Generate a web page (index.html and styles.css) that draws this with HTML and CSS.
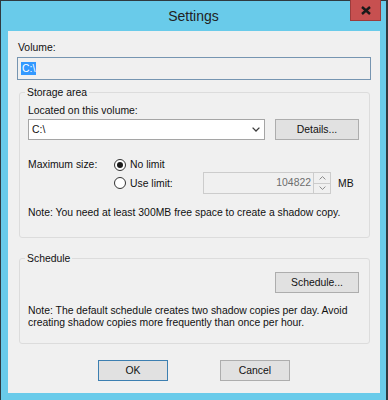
FILE: index.html
```html
<!DOCTYPE html>
<html lang="en">
<head>
    <meta charset="UTF-8">
    <title>Settings</title>
    <link rel="stylesheet" href="styles.css">
</head>
<body>
    <div class="window">
        <div class="titlebar">
            <span></span>
            <h1 class="title">Settings</h1>
            <div class="close">
                <svg width="10" height="9" viewBox="0 0 10 9"><path d="M1 1 L9 8 M9 1 L1 8" stroke="#1a1a1a" stroke-width="2.4" fill="none"/></svg>
            </div>
        </div>

        <div class="client">
            <div class="field-label">Volume:</div>
            <div class="volume-box"><span class="selected">C:\</span></div>

            <!-- Storage area -->
            <fieldset class="group">
                <legend>Storage area</legend>
                <div class="line">Located on this volume:</div>
                <div class="combo-row">
                    <div class="combo">
                        <span>C:\</span>
                        <svg width="8" height="5" viewBox="0 0 8 5"><path d="M0.6 0.6 L4 4 L7.4 0.6" fill="none" stroke="#3c3c3c" stroke-width="1.3"/></svg>
                    </div>
                    <div class="btn">Details...</div>
                </div>
                <div class="size-grid">
                    <span class="line">Maximum size:</span>
                    <span class="radio checked"></span>
                    <span class="line">No limit</span>
                    <span></span>
                    <span></span>

                    <span></span>
                    <span class="radio"></span>
                    <span class="line">Use limit:</span>
                    <div class="spin">
                        <span class="spin-value">104822</span>
                        <div class="spin-btns">
                            <div class="spin-btn"><svg width="7" height="4" viewBox="0 0 7 4"><path d="M0.6 3.4 L3.5 0.6 L6.4 3.4" fill="none" stroke="#8a8a8a" stroke-width="1"/></svg></div>
                            <div class="spin-btn"><svg width="7" height="4" viewBox="0 0 7 4"><path d="M0.6 0.6 L3.5 3.4 L6.4 0.6" fill="none" stroke="#8a8a8a" stroke-width="1"/></svg></div>
                        </div>
                    </div>
                    <span class="line unit">MB</span>
                </div>
                <p class="note">Note: You need at least 300MB free space to create a shadow copy.</p>
            </fieldset>

            <!-- Schedule -->
            <fieldset class="group schedule">
                <legend>Schedule</legend>
                <div class="btn-row">
                    <div class="btn">Schedule...</div>
                </div>
                <p class="note two-lines">Note: The default schedule creates two shadow copies per day. Avoid<br>creating shadow copies more frequently than once per hour.</p>
            </fieldset>

            <div class="dialog-buttons">
                <div class="btn small default">OK</div>
                <div class="btn small">Cancel</div>
            </div>
        </div>
    </div>
</body>
</html>
```

FILE: styles.css
```css
/* Estilos gerais */
* {
    box-sizing: border-box;
}

body {
    margin: 0;
    background-color: #69cbea;
    font-family: "Liberation Sans", Arial, sans-serif;
    font-size: 10.4px;
    color: #111;
}

.window {
    width: 388px;
    height: 400px;
    background-color: #69cbea;
    border-top: 1px solid #2f3a40;
    border-left: 1px solid #2f3a40;
    border-right: 2px solid #2f3a40;
    display: flex;
    flex-direction: column;
}

/* Barra de titulo */
.titlebar {
    height: 30px;
    display: grid;
    grid-template-columns: 1fr auto 1fr;
}

.title {
    margin: 0;
    font-size: 14px;
    font-weight: normal;
    color: #222;
    line-height: 31px;
}

.close {
    justify-self: end;
    align-self: start;
    width: 31px;
    height: 21px;
    margin-top: -1px;
    margin-right: 5px;
    background-color: #c75050;
    border: 1px solid #9c3c3c;
    border-top: none;
    display: flex;
    align-items: center;
    justify-content: center;
}

/* Area do dialogo */
.client {
    height: 362px;
    margin: 0 6px 0 7px;
    padding: 10px 9px 0 9px;
    background-color: #f0f0f0;
    display: flex;
    flex-direction: column;
}

.field-label,
.line {
    line-height: 13px;
}

.field-label {
    padding-left: 1px;
}

.volume-box {
    height: 23px;
    margin-top: 3px;
    border: 1px solid #7695b1;
    background-color: #f0f0f0;
    padding: 0 3px;
    display: flex;
    align-items: center;
}

.selected {
    background-color: #3399ff;
    color: #fff;
    line-height: 13px;
    padding: 0 1px;
}

/* Grupos */
.group {
    margin: 6px 1px 0 2px;
    padding: 5px 10px 18px 8px;
    border: 1px solid #dcdcdc;
    border-radius: 3px;
    min-width: 0;
}

.group legend {
    padding: 0 2px;
    margin-left: -3px;
    line-height: 13px;
}

.combo-row {
    margin-top: 2px;
    display: flex;
    gap: 10px;
}

.combo {
    flex: 1;
    height: 21px;
    background-color: #fff;
    border: 1px solid #a5a5a5;
    padding: 0 4px 0 3px;
    display: flex;
    align-items: center;
    justify-content: space-between;
}

.btn {
    width: 84px;
    height: 21px;
    background-color: #e1e1e1;
    border: 1px solid #adadad;
    text-align: center;
    line-height: 19px;
}

.btn.small {
    width: 70px;
}

.btn.default {
    border-color: #3c7fb1;
}

/* Tamanho maximo */
.size-grid {
    margin-top: 17px;
    display: grid;
    grid-template-columns: 86px 16px 73px 128px auto;
    grid-template-rows: 15px 22px;
    align-items: center;
}

.radio {
    width: 12px;
    height: 12px;
    border: 1px solid #333;
    border-radius: 50%;
    background-color: #fff;
    display: flex;
    align-items: center;
    justify-content: center;
}

.radio.checked::after {
    content: "";
    width: 6px;
    height: 6px;
    border-radius: 50%;
    background-color: #1a1a1a;
}

.spin {
    height: 22px;
    border: 1px solid #cccccc;
    background-color: #f0f0f0;
    display: flex;
}

.spin-value {
    flex: 1;
    text-align: right;
    color: #6d6d6d;
    line-height: 20px;
    padding-right: 2px;
}

.spin-btns {
    width: 17px;
    display: flex;
    flex-direction: column;
}

.spin-btn {
    flex: 1;
    border-left: 1px solid #cccccc;
    display: flex;
    align-items: center;
    justify-content: center;
}

.spin-btn + .spin-btn {
    border-top: 1px solid #cccccc;
}

.unit {
    margin-left: 7px;
}

.note {
    margin: 12px 0 0 0;
    line-height: 13px;
}

/* Agendamento */
.group.schedule {
    margin-top: 14px;
    padding-bottom: 14px;
}

.btn-row {
    margin-top: 2px;
    display: flex;
    justify-content: flex-end;
}

.note.two-lines {
    line-height: 12px;
}

/* Botoes do dialogo */
.dialog-buttons {
    margin-top: 16px;
    display: flex;
    justify-content: center;
    gap: 52px;
}
```
